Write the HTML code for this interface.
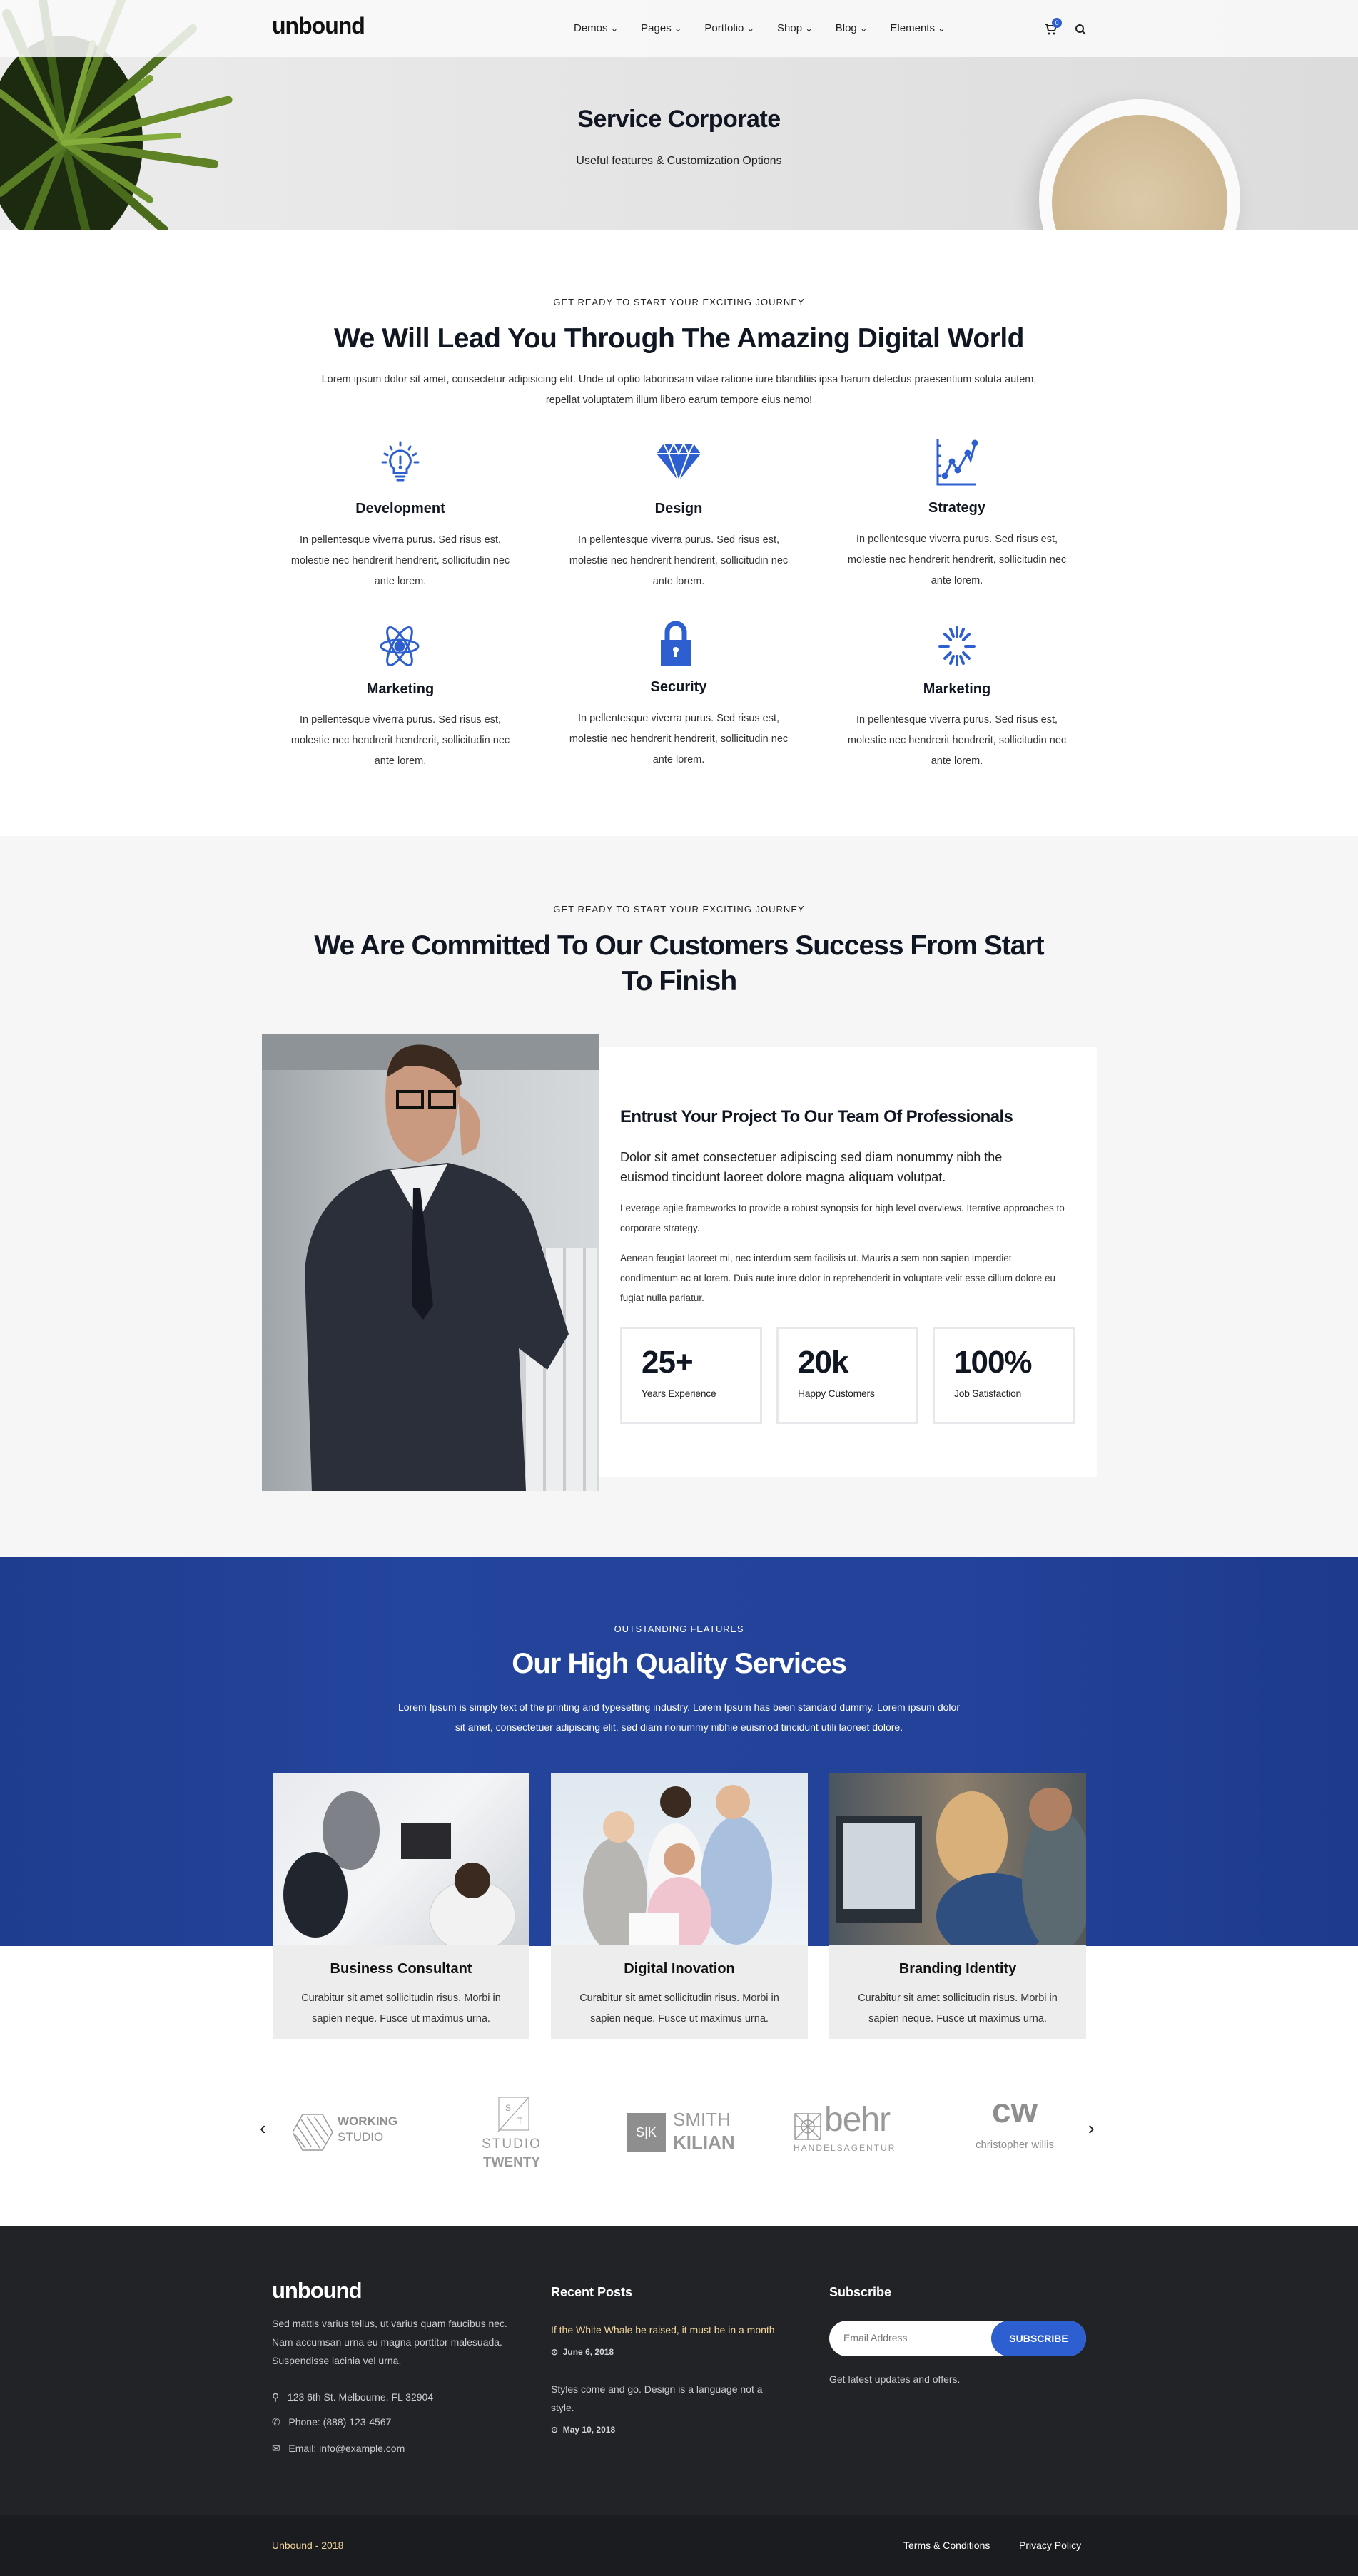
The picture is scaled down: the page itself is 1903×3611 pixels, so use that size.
<!DOCTYPE html>
<html><head><meta charset="utf-8"><style>
*{margin:0;padding:0;box-sizing:border-box}
body{width:1903px;height:3611px;position:relative;font-family:"Liberation Sans",sans-serif;color:#333;background:#fff;overflow:hidden}
.a{position:absolute}
.c{text-align:center}
.eb{font-size:13px;letter-spacing:1px;color:#222;text-transform:uppercase}
.h2{font-size:39px;letter-spacing:-1px;line-height:50px}
.p{font-size:14.5px;line-height:29px;color:#333}
.ft{font-size:14px;line-height:26px;color:#c9cbd0}
</style></head><body>

<!-- HERO -->
<div class="a" style="left:0;top:0;width:1903px;height:322px;background:linear-gradient(90deg,#ececec,#e4e4e4 50%,#dcdcdc);overflow:hidden">
  <svg class="a" style="left:0;top:0" width="380" height="322" viewBox="0 0 380 322">
    <ellipse cx="90" cy="200" rx="110" ry="150" fill="#1c2a10"/>
    <g stroke-linecap="round" fill="none">
      <path d="M90 200 L10 20" stroke="#4a6b1c" stroke-width="14"/>
      <path d="M90 200 L60 0" stroke="#3d5e18" stroke-width="12"/>
      <path d="M90 200 L170 0" stroke="#5b7d26" stroke-width="12"/>
      <path d="M90 200 L270 40" stroke="#4e7020" stroke-width="12"/>
      <path d="M90 200 L320 140" stroke="#6a8f2a" stroke-width="11"/>
      <path d="M90 200 L300 230" stroke="#5f8226" stroke-width="12"/>
      <path d="M90 200 L230 322" stroke="#4a6b1c" stroke-width="12"/>
      <path d="M90 200 L120 322" stroke="#3f611a" stroke-width="12"/>
      <path d="M90 200 L40 322" stroke="#4f7320" stroke-width="12"/>
      <path d="M90 200 L0 270" stroke="#587c24" stroke-width="12"/>
      <path d="M90 200 L0 130" stroke="#6b8f2e" stroke-width="10"/>
      <path d="M90 200 L210 110" stroke="#77a032" stroke-width="10"/>
      <path d="M90 200 L210 280" stroke="#6b922c" stroke-width="10"/>
      <path d="M90 200 L30 80" stroke="#82a83a" stroke-width="8"/>
      <path d="M90 200 L130 60" stroke="#7aa236" stroke-width="8"/>
      <path d="M90 200 L250 190" stroke="#84ad3c" stroke-width="8"/>
    </g>
  </svg>
  <div class="a" style="left:1456px;top:139px;width:282px;height:282px;border-radius:50%;background:#fafafa;box-shadow:-10px 10px 30px rgba(0,0,0,.15)"></div>
  <div class="a" style="left:1474px;top:161px;width:246px;height:246px;border-radius:50%;background:radial-gradient(circle,#dccaa8,#cbb38c);"></div>
  <div class="a c" style="left:0;width:1903px;top:148px;font-size:34px;font-weight:700;color:#111722;letter-spacing:-.5px">Service Corporate</div>
  <div class="a c" style="left:0;width:1903px;top:217px;font-size:16px;color:#222">Useful features &amp; Customization Options</div>
</div>
<!-- NAV -->
<div class="a" style="left:0;top:0;width:1903px;height:80px;background:rgba(250,250,250,.86)">
  <div class="a" style="left:381px;top:18px;font-size:32px;font-weight:700;color:#111;letter-spacing:-1px">unbound</div>
  <div class="a" style="left:804px;top:31px;font-size:15px;color:#222;white-space:nowrap">
    <span style="margin-right:32px">Demos <small>⌄</small></span><span style="margin-right:32px">Pages <small>⌄</small></span><span style="margin-right:32px">Portfolio <small>⌄</small></span><span style="margin-right:32px">Shop <small>⌄</small></span><span style="margin-right:32px">Blog <small>⌄</small></span><span>Elements <small>⌄</small></span>
  </div>
  <svg class="a" style="left:1463px;top:32px" width="18" height="18" viewBox="0 0 18 18"><path d="M1 2h3l2 9h9l2-7H5" fill="none" stroke="#222" stroke-width="2"/><circle cx="7" cy="15" r="1.5" fill="#222"/><circle cx="14" cy="15" r="1.5" fill="#222"/></svg>
  <div class="a c" style="left:1474px;top:25px;width:14px;height:14px;border-radius:50%;background:#2d5fd0;color:#fff;font-size:9px;line-height:14px">0</div>
  <svg class="a" style="left:1506px;top:33px" width="16" height="16" viewBox="0 0 16 16"><circle cx="7" cy="7" r="5" fill="none" stroke="#222" stroke-width="2"/><path d="M11 11l4 4" stroke="#222" stroke-width="2"/></svg>
</div>

<!-- SECTION 1 -->
<div class="a c eb" style="left:0;width:1903px;top:416px">Get ready to start your exciting journey</div>
<div class="a c h2" style="left:0;width:1903px;top:450px;font-weight:700;color:#111722;letter-spacing:-.5px">We Will Lead You Through The Amazing Digital World</div>
<div class="a c p" style="left:406px;width:1091px;top:518px;font-size:14.5px">Lorem ipsum dolor sit amet, consectetur adipisicing elit. Unde ut optio laboriosam vitae ratione iure blanditiis ipsa harum delectus praesentium soluta autem,<br>repellat voluptatem illum libero earum tempore eius nemo!</div>

<svg class="a" style="left:531px;top:618px" width="60" height="62" viewBox="0 0 60 62" fill="none" stroke="#2d5fd0" stroke-width="3" stroke-linecap="round"><path d="M30 2v4M16 8l2 4M44 8l-2 4M8 18l4 2M52 18l-4 2M5 30h5M50 30h5"/><path d="M30 14a14 14 0 0 0-9 25v6h18v-6a14 14 0 0 0-9-25z"/><path d="M30 22v10"/><circle cx="30" cy="37" r="1" fill="#2d5fd0"/><path d="M24 50h12M26 55h8"/></svg>
<svg class="a" style="left:920px;top:622px" width="62" height="52" viewBox="0 0 62 52"><path d="M10 0h42l10 14L31 52 0 14z" fill="#2d5fd0"/><path d="M0 14h62M10 0l7 14 14 38M52 0l-7 14L31 52M17 14L24 0l7 14 7-14 7 14" fill="none" stroke="#fff" stroke-width="2"/></svg>
<svg class="a" style="left:1312px;top:615px" width="58" height="66" viewBox="0 0 58 66" fill="none" stroke="#2d5fd0" stroke-width="3"><path d="M2 0v64h54"/><path d="M2 10h4M2 24h4M2 38h4M2 52h4"/><path d="M12 52l10-20 8 12 14-24 4 10 6-22"/><circle cx="12" cy="52" r="3" fill="#2d5fd0"/><circle cx="22" cy="32" r="3" fill="#2d5fd0"/><circle cx="30" cy="44" r="3" fill="#2d5fd0"/><circle cx="44" cy="20" r="3" fill="#2d5fd0"/><circle cx="54" cy="6" r="3" fill="#2d5fd0"/></svg>
<svg class="a" style="left:532px;top:873px" width="56" height="66" viewBox="0 0 56 66" fill="none" stroke="#2d5fd0" stroke-width="3"><ellipse cx="28" cy="33" rx="10" ry="30" transform="rotate(30 28 33)"/><ellipse cx="28" cy="33" rx="10" ry="30" transform="rotate(-30 28 33)"/><ellipse cx="28" cy="33" rx="26" ry="9"/><circle cx="28" cy="33" r="6" fill="#2d5fd0"/></svg>
<svg class="a" style="left:926px;top:871px" width="42" height="62" viewBox="0 0 42 62"><path d="M9 28V15a12 12 0 0 1 24 0v13" fill="none" stroke="#2d5fd0" stroke-width="7"/><rect x="0" y="26" width="42" height="36" fill="#2d5fd0"/><circle cx="21" cy="40" r="4" fill="#fff"/><rect x="19" y="40" width="4" height="10" fill="#fff"/></svg>
<svg class="a" style="left:1315px;top:878px" width="52" height="56" viewBox="0 0 52 56" stroke="#2d5fd0" stroke-width="4" stroke-linecap="round"><path d="M26 2v12M26 42v12M2 28h12M38 28h12M9 11l8 8M35 37l8 8M43 11l-8 8M17 37l-8 8M17 4l4 10M35 4l-4 10M17 52l4-10M35 52l-4-10"/></svg>

<div class="a c" style="left:366px;width:390px;top:702px;font-size:20px;font-weight:700;color:#111722">Development</div>
<div class="a c" style="left:756px;width:390px;top:702px;font-size:20px;font-weight:700;color:#111722">Design</div>
<div class="a c" style="left:1146px;width:390px;top:701px;font-size:20px;font-weight:700;color:#111722">Strategy</div>
<div class="a c" style="left:366px;width:390px;top:955px;font-size:20px;font-weight:700;color:#111722">Marketing</div>
<div class="a c" style="left:756px;width:390px;top:952px;font-size:20px;font-weight:700;color:#111722">Security</div>
<div class="a c" style="left:1146px;width:390px;top:955px;font-size:20px;font-weight:700;color:#111722">Marketing</div>
<div class="a c p" style="left:396px;width:330px;top:743px">In pellentesque viverra purus. Sed risus est, molestie nec hendrerit hendrerit, sollicitudin nec ante lorem.</div>
<div class="a c p" style="left:786px;width:330px;top:743px">In pellentesque viverra purus. Sed risus est, molestie nec hendrerit hendrerit, sollicitudin nec ante lorem.</div>
<div class="a c p" style="left:1176px;width:330px;top:742px">In pellentesque viverra purus. Sed risus est, molestie nec hendrerit hendrerit, sollicitudin nec ante lorem.</div>
<div class="a c p" style="left:396px;width:330px;top:995px">In pellentesque viverra purus. Sed risus est, molestie nec hendrerit hendrerit, sollicitudin nec ante lorem.</div>
<div class="a c p" style="left:786px;width:330px;top:993px">In pellentesque viverra purus. Sed risus est, molestie nec hendrerit hendrerit, sollicitudin nec ante lorem.</div>
<div class="a c p" style="left:1176px;width:330px;top:995px">In pellentesque viverra purus. Sed risus est, molestie nec hendrerit hendrerit, sollicitudin nec ante lorem.</div>

<!-- SECTION 2 -->
<div class="a" style="left:0;top:1172px;width:1903px;height:1010px;background:#f6f6f6"></div>
<div class="a c eb" style="left:0;width:1903px;top:1267px">Get ready to start your exciting journey</div>
<div class="a c h2" style="left:416px;width:1071px;top:1301px;font-weight:700;color:#111722">We Are Committed To Our Customers Success From Start To Finish</div>
<div class="a" style="left:367px;top:1450px;width:472px;height:640px;background:linear-gradient(90deg,#9ea4a8,#c4c8cb 40%,#d6d9db);overflow:hidden">
  <div class="a" style="left:0;top:0;width:472px;height:50px;background:#8e9397"></div>
  <div class="a" style="left:370px;top:300px;width:100px;height:340px;background:repeating-linear-gradient(90deg,#eceef0 0 24px,#c9ccce 24px 28px)"></div>
  <svg class="a" style="left:0;top:0" width="472" height="640" viewBox="0 0 472 640">
    <path d="M70 640 L60 330 Q70 220 170 190 L260 180 Q360 200 380 260 L430 420 L400 470 L360 440 L370 640 Z" fill="#2a2f3a"/>
    <path d="M180 190 L220 260 L260 182 Z" fill="#eef0f2"/>
    <path d="M212 215 L222 215 L240 380 L226 400 L210 380 Z" fill="#151820"/>
    <path d="M178 40 Q170 80 175 120 Q185 170 220 180 Q260 170 270 130 L278 80 Q270 30 220 25 Q185 25 178 40Z" fill="#c99a80"/>
    <path d="M175 60 Q180 10 230 15 Q275 20 280 70 L272 75 Q250 40 200 45 Z" fill="#3a2a20"/>
    <path d="M190 80h35v22h-35zM235 80h35v22h-35z" fill="none" stroke="#111" stroke-width="4"/>
    <path d="M275 85 Q320 110 300 160 L280 170 Z" fill="#c99a80"/>
  </svg>
</div>
<div class="a" style="left:839px;top:1468px;width:698px;height:603px;background:#fff"></div>
<div class="a" style="left:869px;top:1552px;font-size:24px;font-weight:700;color:#111722;letter-spacing:-.6px">Entrust Your Project To Our Team Of Professionals</div>
<div class="a" style="left:869px;top:1608px;width:585px;font-size:18px;line-height:28px;color:#222">Dolor sit amet consectetuer adipiscing sed diam nonummy nibh the euismod tincidunt laoreet dolore magna aliquam volutpat.</div>
<div class="a" style="left:869px;top:1680px;width:640px;font-size:13.5px;line-height:28px;color:#333">Leverage agile frameworks to provide a robust synopsis for high level overviews. Iterative approaches to corporate strategy.</div>
<div class="a" style="left:869px;top:1750px;width:620px;font-size:13.5px;line-height:28px;color:#333">Aenean feugiat laoreet mi, nec interdum sem facilisis ut. Mauris a sem non sapien imperdiet condimentum ac at lorem. Duis aute irure dolor in reprehenderit in voluptate velit esse cillum dolore eu fugiat nulla pariatur.</div>
<div class="a" style="left:869px;top:1860px;width:199px;height:136px;border:3px solid #e8e8ec"><div class="a" style="left:27px;top:22px;font-size:44px;font-weight:700;color:#111722;letter-spacing:-1px">25+</div><div class="a" style="left:27px;top:82px;font-size:14px;color:#222;letter-spacing:-.3px">Years Experience</div></div>
<div class="a" style="left:1088px;top:1860px;width:199px;height:136px;border:3px solid #e8e8ec"><div class="a" style="left:27px;top:22px;font-size:44px;font-weight:700;color:#111722;letter-spacing:-1px">20k</div><div class="a" style="left:27px;top:82px;font-size:14px;color:#222;letter-spacing:-.3px">Happy Customers</div></div>
<div class="a" style="left:1307px;top:1860px;width:199px;height:136px;border:3px solid #e8e8ec"><div class="a" style="left:27px;top:22px;font-size:44px;font-weight:700;color:#111722;letter-spacing:-1px">100%</div><div class="a" style="left:27px;top:82px;font-size:14px;color:#222;letter-spacing:-.3px">Job Satisfaction</div></div>

<!-- SECTION 3 -->
<div class="a" style="left:0;top:2182px;width:1903px;height:546px;background:linear-gradient(90deg,#1f3d8f,#24459d 30%,#23429a 70%,#1d3a8c)"></div>
<div class="a c" style="left:0;width:1903px;top:2276px;font-size:13px;color:#fff;letter-spacing:.8px">OUTSTANDING FEATURES</div>
<div class="a c" style="left:0;width:1903px;top:2310px;font-size:40px;font-weight:700;color:#fff;letter-spacing:-1px">Our High Quality Services</div>
<div class="a c" style="left:471px;width:961px;top:2379px;font-size:14px;line-height:28px;color:#fff">Lorem Ipsum is simply text of the printing and typesetting industry. Lorem Ipsum has been standard dummy. Lorem ipsum dolor<br>sit amet, consectetuer adipiscing elit, sed diam nonummy nibhie euismod tincidunt utili laoreet dolore.</div>

<div class="a" style="left:382px;top:2486px;width:360px;height:241px;background:linear-gradient(135deg,#e8eaee,#f4f5f7 50%,#cfd3d8)"><svg width="360" height="241"><ellipse cx="110" cy="80" rx="40" ry="55" fill="#7e8288"/><ellipse cx="60" cy="170" rx="45" ry="60" fill="#20252e"/><ellipse cx="280" cy="200" rx="60" ry="50" fill="#f2f2f2" stroke="#ccc"/><circle cx="280" cy="150" r="25" fill="#3b2a20"/><rect x="180" y="70" width="70" height="50" fill="#2a2a2e"/></svg></div>
<div class="a" style="left:772px;top:2486px;width:360px;height:241px;background:linear-gradient(180deg,#dfe8f0,#eef3f7)"><svg width="360" height="241"><ellipse cx="90" cy="170" rx="45" ry="80" fill="#b7b6b2"/><circle cx="95" cy="75" r="22" fill="#e9c7a8"/><ellipse cx="175" cy="140" rx="40" ry="70" fill="#f7f7f7"/><circle cx="175" cy="40" r="22" fill="#3b2a20"/><ellipse cx="260" cy="150" rx="50" ry="90" fill="#a8bfdd"/><circle cx="255" cy="40" r="24" fill="#e3b896"/><ellipse cx="180" cy="200" rx="45" ry="55" fill="#f0c5d0"/><circle cx="180" cy="120" r="22" fill="#d4a282"/><rect x="110" y="195" width="70" height="46" fill="#fafafa"/></svg></div>
<div class="a" style="left:1162px;top:2486px;width:360px;height:241px;background:linear-gradient(90deg,#4a5560,#8a7d6c 50%,#52575a)"><svg width="360" height="241"><rect x="10" y="60" width="120" height="150" fill="#2a3038"/><rect x="20" y="70" width="100" height="120" fill="#cfd6dd"/><ellipse cx="200" cy="90" rx="50" ry="65" fill="#d9b07a"/><ellipse cx="230" cy="200" rx="80" ry="60" fill="#2f4f80"/><ellipse cx="320" cy="150" rx="50" ry="100" fill="#5a6a70"/><circle cx="310" cy="50" r="30" fill="#b08062"/></svg></div>
<div class="a" style="left:382px;top:2727px;width:360px;height:131px;background:#eeeded"></div>
<div class="a" style="left:772px;top:2727px;width:360px;height:131px;background:#eeeded"></div>
<div class="a" style="left:1162px;top:2727px;width:360px;height:131px;background:#eeeded"></div>
<div class="a c" style="left:382px;width:360px;top:2749px;font-size:20px;font-weight:700;color:#111">Business Consultant</div>
<div class="a c" style="left:772px;width:360px;top:2749px;font-size:20px;font-weight:700;color:#111">Digital Inovation</div>
<div class="a c" style="left:1162px;width:360px;top:2749px;font-size:20px;font-weight:700;color:#111">Branding Identity</div>
<div class="a c p" style="left:402px;width:320px;top:2787px">Curabitur sit amet sollicitudin risus. Morbi in sapien neque. Fusce ut maximus urna.</div>
<div class="a c p" style="left:792px;width:320px;top:2787px">Curabitur sit amet sollicitudin risus. Morbi in sapien neque. Fusce ut maximus urna.</div>
<div class="a c p" style="left:1182px;width:320px;top:2787px">Curabitur sit amet sollicitudin risus. Morbi in sapien neque. Fusce ut maximus urna.</div>

<!-- LOGOS -->
<div class="a" style="left:364px;top:2968px;font-size:26px;color:#222">‹</div>
<div class="a" style="left:1525px;top:2968px;font-size:26px;color:#222">›</div>
<svg class="a" style="left:410px;top:2963px" width="56" height="52" viewBox="0 0 56 52" fill="none" stroke="#999" stroke-width="1.5"><path d="M14 1h28l14 25-14 25H14L0 26z"/><path d="M6 16l20 30M12 8l26 40M20 4l26 38M30 4l20 28M4 30l14 18"/></svg>
<div class="a" style="left:473px;top:2963px;font-size:17px;font-weight:700;color:#8f8f8f;line-height:22px">WORKING<br><span style="font-weight:400">STUDIO</span></div>
<svg class="a" style="left:694px;top:2939px" width="48" height="50" viewBox="0 0 48 50" fill="none" stroke="#999"><rect x="5" y="1" width="42" height="46"/><path d="M4 49L46 2"/><text x="14" y="20" font-size="12" fill="#999" stroke="none" font-family="Liberation Sans">S</text><text x="31" y="38" font-size="12" fill="#999" stroke="none" font-family="Liberation Sans">T</text></svg>
<div class="a c" style="left:660px;width:114px;top:2993px;font-size:19px;color:#999;letter-spacing:2px;line-height:26px">STUDIO<br><b style="letter-spacing:0">TWENTY</b></div>
<div class="a c" style="left:878px;top:2962px;width:55px;height:54px;background:#8e8e8e;color:#fff;font-size:18px;line-height:54px">S|K</div>
<div class="a" style="left:943px;top:2955px;font-size:26px;color:#999;line-height:32px">SMITH<br><b>KILIAN</b></div>
<svg class="a" style="left:1113px;top:2962px" width="38" height="38" viewBox="0 0 38 38" fill="none" stroke="#999" stroke-width="1.5"><rect x="1" y="1" width="36" height="36"/><path d="M1 1l36 36M37 1L1 37M19 1v36M1 19h36"/><circle cx="19" cy="19" r="9"/></svg>
<div class="a" style="left:1155px;top:2944px;font-size:48px;color:#999;line-height:56px;letter-spacing:-1px">behr</div>
<div class="a" style="left:1112px;top:3004px;font-size:12px;color:#999;letter-spacing:2px">HANDELSAGENTUR</div>
<div class="a c" style="left:1360px;width:124px;top:2935px;font-size:48px;font-weight:700;color:#8e8e8e;line-height:50px">cw</div>
<div class="a c" style="left:1340px;width:164px;top:2998px;font-size:15px;color:#8e8e8e">christopher willis</div>

<!-- FOOTER -->
<div class="a" style="left:0;top:3120px;width:1903px;height:405px;background:#212326"></div>
<div class="a" style="left:0;top:3525px;width:1903px;height:86px;background:#1b1c1f"></div>
<div class="a" style="left:381px;top:3193px;font-size:31px;font-weight:700;color:#fff;letter-spacing:-1px">unbound</div>
<div class="a ft" style="left:381px;top:3244px;width:345px">Sed mattis varius tellus, ut varius quam faucibus nec. Nam accumsan urna eu magna porttitor malesuada. Suspendisse lacinia vel urna.</div>
<div class="a ft" style="left:381px;top:3347px;width:350px">⚲&nbsp;&nbsp;&nbsp;123 6th St. Melbourne, FL 32904</div>
<div class="a ft" style="left:381px;top:3382px;width:350px">✆&nbsp;&nbsp;&nbsp;Phone: (888) 123-4567</div>
<div class="a ft" style="left:381px;top:3419px;width:350px">✉&nbsp;&nbsp;&nbsp;Email: info@example.com</div>
<div class="a" style="left:772px;top:3203px;font-size:18px;font-weight:700;color:#fff">Recent Posts</div>
<div class="a ft" style="left:772px;top:3253px;width:360px;color:#f2d49a">If the White Whale be raised, it must be in a month</div>
<div class="a" style="left:772px;top:3290px;font-size:12px;font-weight:700;color:#d5d6d9">⊙&nbsp;&nbsp;June 6, 2018</div>
<div class="a ft" style="left:772px;top:3336px;width:330px">Styles come and go. Design is a language not a style.</div>
<div class="a" style="left:772px;top:3399px;font-size:12px;font-weight:700;color:#d5d6d9">⊙&nbsp;&nbsp;May 10, 2018</div>
<div class="a" style="left:1162px;top:3203px;font-size:18px;font-weight:700;color:#fff">Subscribe</div>
<div class="a" style="left:1162px;top:3253px;width:360px;height:50px;border-radius:25px;background:#fff"></div>
<div class="a" style="left:1182px;top:3269px;font-size:14px;color:#777">Email Address</div>
<div class="a c" style="left:1389px;top:3253px;width:133px;height:50px;border-radius:25px;background:#2d5fd0;color:#fff;font-size:14px;font-weight:700;line-height:50px">SUBSCRIBE</div>
<div class="a ft" style="left:1162px;top:3322px">Get latest updates and offers.</div>
<div class="a" style="left:381px;top:3560px;font-size:14px;color:#f2d49a">Unbound - 2018</div>
<div class="a" style="left:1266px;top:3560px;font-size:14px;color:#fff">Terms &amp; Conditions</div>
<div class="a" style="left:1428px;top:3560px;font-size:14px;color:#fff">Privacy Policy</div>
</body></html>
